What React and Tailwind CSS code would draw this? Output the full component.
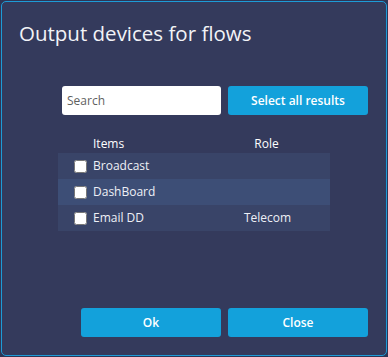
import { useState } from "react";

const rows = [
  { id: 1, name: "Broadcast", role: "" },
  { id: 2, name: "DashBoard", role: "" },
  { id: 3, name: "Email DD", role: "Telecom" },
];

export default function App() {
  const [checked, setChecked] = useState([]);

  const toggle = (id) => {
    if (checked.includes(id)) {
      setChecked(checked.filter((x) => x !== id));
    } else {
      setChecked([...checked, id]);
    }
  };

  return (
    <div className="w-[388px] h-[357px] bg-[#2f3554] p-[1px]" style={{ fontFamily: '"Open Sans", "Noto Sans", sans-serif' }}>
      <div className="relative h-[355px] w-[386px] rounded-[5px] border border-[#1d9bd7] bg-[#343a5c] text-white">
        {/* title */}
        <div className="pl-[17px] pt-[17px] text-[20.5px] leading-[29px] text-[#f2f3f7]">Output devices for flows</div>

        {/* search row */}
        <div className="mt-[38px] flex gap-[7px] pl-[60px]">
          <input
            type="text"
            placeholder="Search"
            className="h-[29px] w-[159px] rounded-[3px] bg-white px-[5px] text-[12px] text-gray-800 placeholder:text-[#5f5f5f] outline-none"
          />
          <button className="h-[29px] w-[140px] rounded-[3px] bg-[#13a1db] text-[12px] font-semibold text-white">
            Select all results
          </button>
        </div>

        {/* table */}
        <div className="ml-[56px] mt-[20px] w-[272px] text-[12px]">
          <div className="flex h-[18px] items-center">
            <div className="w-[35px]"></div>
            <div className="flex-1">Items</div>
            <div className="w-[125px] text-center pr-[2px]">Role</div>
          </div>
          {rows.map((item, i) => (
            <div
              key={item.id}
              className={`flex h-[26px] items-center ${i === 1 ? "bg-[#3d4e76]" : "bg-[#394468]"}`}
            >
              <div className="flex w-[35px] items-center pl-[16px]">
                <input
                  type="checkbox"
                  checked={checked.includes(item.id)}
                  onChange={() => toggle(item.id)}
                  className="h-[13px] w-[13px] m-0"
                />
              </div>
              <div className="flex-1 text-[#eef0f6]">{item.name}</div>
              <div className="w-[125px] text-center text-[#eef0f6]">{item.role}</div>
            </div>
          ))}
        </div>

        {/* footer */}
        <div className="absolute bottom-[18px] left-[79px] flex gap-[7px]">
          <button className="h-[29px] w-[140px] rounded-[3px] bg-[#13a1db] text-[12px] font-semibold text-white">Ok</button>
          <button className="h-[29px] w-[140px] rounded-[3px] bg-[#13a1db] text-[12px] font-semibold text-white">Close</button>
        </div>
      </div>
    </div>
  );
}
